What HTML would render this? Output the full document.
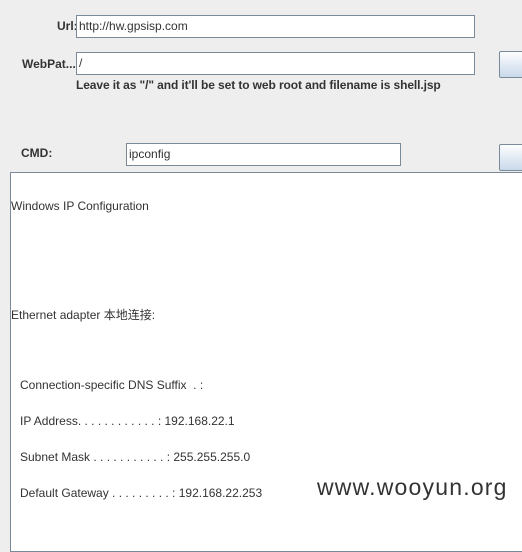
<!DOCTYPE html>
<html><head><style>
body{margin:0;width:522px;height:516px;background:#eeeeee;position:relative;overflow:hidden;font-family:"Liberation Sans","Noto Sans CJK SC",sans-serif;font-size:12px;color:#333}
.a{position:absolute;white-space:nowrap}
.in{position:absolute;background:#fff;border:1px solid #7a8a99;box-sizing:border-box;padding-left:2px;line-height:20px;color:#333}
.b{position:absolute;border:1px solid #7a8a99;border-radius:2px;background:linear-gradient(#fdfdfe,#c8d9ea);box-sizing:border-box}
.t{position:absolute;left:10px;top:172px;width:520px;height:380px;background:#fff;border:1px solid #7a8a99;box-sizing:border-box}
.l{position:absolute;white-space:nowrap;color:#333}
</style></head><body>
<div class="a" style="left:57px;top:19px;font-weight:bold">Url:</div>
<div class="in" style="left:76px;top:15px;width:399px;height:23px">http://hw.gpsisp.com</div>
<div class="a" style="left:22px;top:57px;font-weight:bold">WebPat...</div>
<div class="in" style="left:76px;top:52px;width:399px;height:23px">/</div>
<div class="b" style="left:499px;top:51px;width:30px;height:27px"></div>
<div class="a" style="left:76px;top:78px;font-weight:bold;letter-spacing:-0.1px">Leave it as "/" and it'll be set to web root and filename is shell.jsp</div>
<div class="a" style="left:21px;top:146px;font-weight:bold">CMD:</div>
<div class="in" style="left:126px;top:143px;width:275px;height:23px">ipconfig</div>
<div class="b" style="left:499px;top:144px;width:30px;height:27px"></div>
<div class="t"></div>
<div class="l" style="left:11px;top:199px">Windows IP Configuration</div>
<div class="l" style="left:11px;top:306px">Ethernet adapter 本地连接:</div>
<div class="l" style="left:20px;top:378px">Connection-specific DNS Suffix &nbsp;. :</div>
<div class="l" style="left:20px;top:414px">IP Address. . . . . . . . . . . . : 192.168.22.1</div>
<div class="l" style="left:20px;top:450px">Subnet Mask . . . . . . . . . . . : 255.255.255.0</div>
<div class="l" style="left:20px;top:486px">Default Gateway . . . . . . . . . : 192.168.22.253</div>
<div class="a" style="left:317px;top:474px;font-size:23px;letter-spacing:1.2px;color:#333">www.wooyun.org</div>
</body></html>
